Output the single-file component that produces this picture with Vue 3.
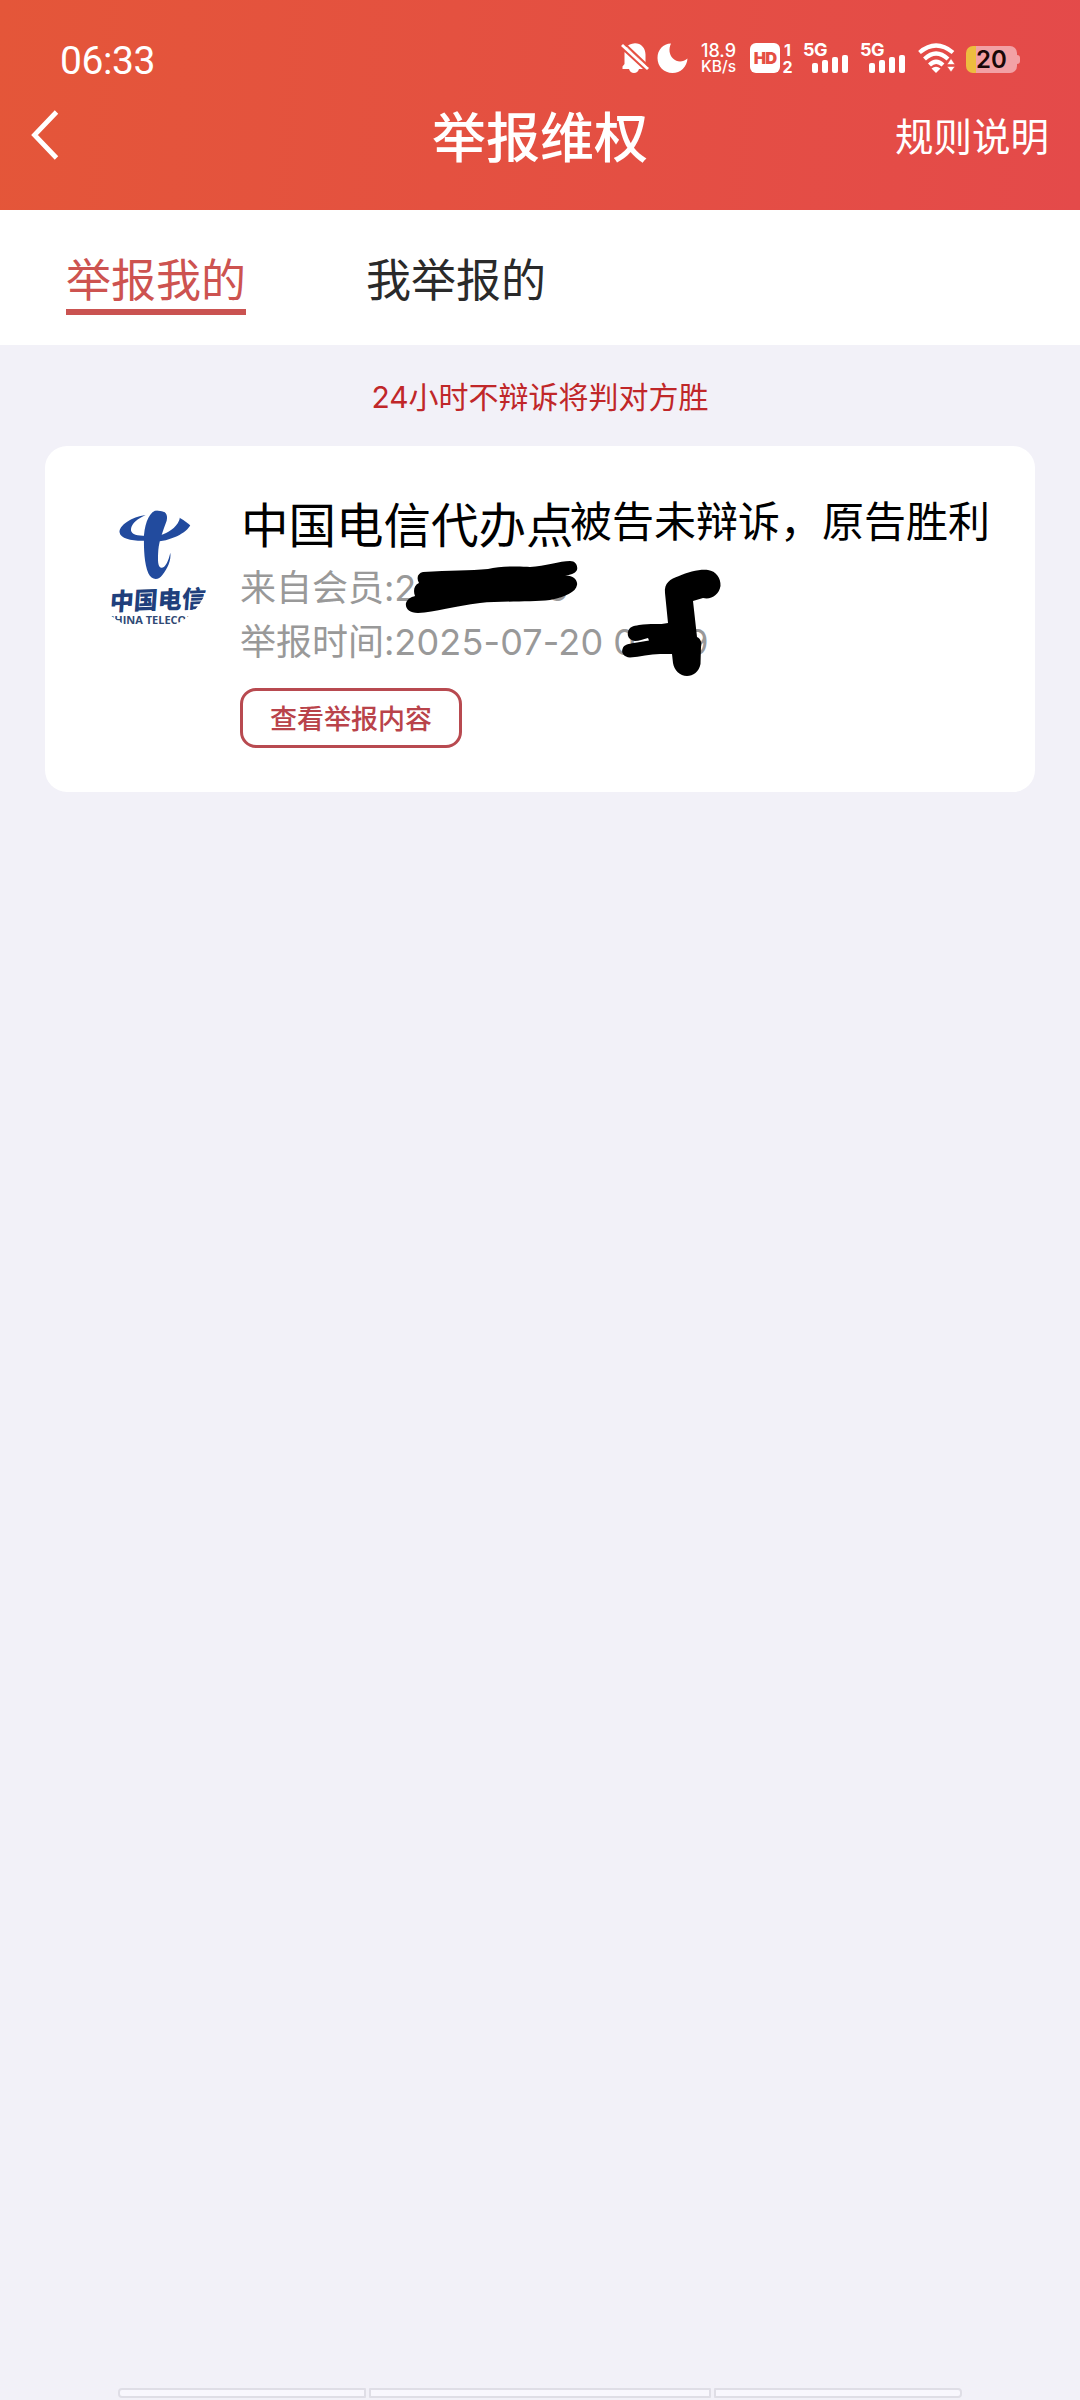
<script setup>
import { ref } from 'vue'

const tabs = ['举报我的', '我举报的']
const active = ref(0)
const report = {
  name: '中国电信代办点',
  result: '被告未辩诉，原告胜利',
  date: '2025-07-20',
}
const bars = [10, 13, 16, 18]
</script>

<template>
  <div class="page">
    <header class="header">
      <div class="status">
        <span class="clock">06:33</span>
        <div class="indicators">
          <svg class="bell" width="28" height="30" viewBox="0 0 28 30">
            <path d="M5 5C7 1.500 10 0.500 14 0.200C20 0.200 24.500 5 24.500 11.500V20L25 21.500L7.500 5.800ZM3.500 9L22 26H18C17.200 28.600 15.500 30 13 30S8.800 28.600 8 26H1.500V23.500L3.500 21Z" fill="#fff" />
            <path d="M1 2L27 26" stroke="#fff" stroke-width="3" />
            <path d="M4 1L28 23.500" stroke="#e5503f" stroke-width="1.800" />
          </svg>
          <svg class="moon" width="31" height="30" viewBox="0 0 31 30">
            <path d="M14 0.500C6 0.500 0.500 7 0.500 15C0.500 23.500 7 30 15.500 30C23.500 30 30 24 30.500 15.500C26 19.500 20 19.500 16 15.500C12 11.500 11.500 5.500 14 0.500Z" fill="#fff" />
          </svg>
          <div class="speed"><span>18.9</span><span>KB/s</span></div>
          <span class="hd">HD</span>
          <div class="sim"><span>1</span><span>2</span></div>
          <div v-for="n in 2" :key="n" class="signal">
            <span>5G</span>
            <div class="bars"><i v-for="h in bars" :key="h" :style="{ height: h + 'px' }"></i></div>
          </div>
          <svg class="wifi" width="37" height="30" viewBox="0 0 37 30">
            <g fill="none" stroke="#fff" stroke-width="4.200">
              <path d="M1.500 9.500Q18 -4.500 35 9.500" />
              <path d="M6.500 16Q18 5 30 16" />
              <path d="M11.500 22Q18 15.500 25 22" />
            </g>
            <path d="M13.500 25.500Q18 22 22.500 25.500L18 30Z" fill="#fff" />
            <path d="M33 15.500L37 21.500H29ZM33 29L29 23.500H37Z" fill="#fff" stroke="#e54d45" stroke-width="0.600" />
          </svg>
          <div class="battery"><span>20</span></div>
        </div>
      </div>
      <nav class="nav">
        <div class="side">
          <svg width="28" height="50" viewBox="0 0 28 50">
            <path d="M25.500 2L3.500 25L25.500 48" fill="none" stroke="#fff" stroke-width="4.800" />
          </svg>
        </div>
        <h1>举报维权</h1>
        <div class="side rules">规则说明</div>
      </nav>
    </header>

    <div class="tabs">
      <div v-for="(t, i) in tabs" :key="t" class="tab" :class="{ active: i === active }" @click="active = i">{{ t }}</div>
    </div>

    <p class="notice">24小时不辩诉将判对方胜</p>

    <section class="card">
      <div class="avatar">
        <svg width="120" height="120" viewBox="90 510 120 120">
          <g fill="#224b9e" transform="translate(105 500) scale(.3333)">
            <path d="M122 45C80 50 40 78 44 98C47 115 80 123 118 122V107C92 108 76 100 78 87C80 70 98 56 122 45Z" />
            <path d="M198 31C222 36 229 50 222 62C212 84 190 98 166 106L164 124C215 116 258 90 260 62C260 44 235 32 198 31Z" />
            <path d="M158 31C135 32 121 65 117 105C116 150 118 190 130 220C140 241 160 242 172 225C188 205 199 180 196 158C190 185 180 205 168 203C158 200 158 180 160 150C163 120 175 90 185 62C190 42 180 31 158 31Z" />
          </g>
          <text x="173" y="609" class="brand" transform="rotate(-2 150 600) skewX(-6)">中国电信</text>
          <text x="152" y="623.500" class="brand-en">CHINA TELECOM</text>
        </svg>
      </div>
      <div class="body">
        <div class="headline">
          <span class="name">{{ report.name }}</span>
          <span class="result">{{ report.result }}</span>
        </div>
        <div class="meta">来自会员:<b>27</b><b class="tail">6</b></div>
        <div class="meta">举报时间:<b>{{ report.date }}</b><b class="hour">0</b><b class="minute">9</b></div>
        <button class="view">查看举报内容</button>
      </div>
      <svg class="ink" width="990" height="346" viewBox="45 446 990 346">
        <path d="M423 572C450 570 470 571 488 569C500 566 520 566 530 567C545 566 560 561 570 561C576 561 578 566 577 570C575 574 570 575 565 575.500C573 575 578 580 577 585C576 592 565 597 550 600C530 602 500 601 480 603C455 606 435 612 418 613C409 613 405 608 406 603C408 598 412 597 415 596C413 591 414 585 419 583C416 578 418 573 423 572Z" />
        <path d="M665 593C664 583 670 579 679 576C688 572 700 569 708 570C716 571 721 578 720.500 586C719 595 711 600 703 598L693 601L697 637C701 639 702 643 701 647L700.500 664C699 672 693 676 687 676C680 676 674 670 673 663L672 654H660C650 654 640 657 630 657.500C624 657 621 653 622.500 649C624 644 629 644 634 643L649 640.500L648 638C643 639 639 641 635 641C629 640 627 636 628 632C629 627 633 626 639 625C650 623 660 625 668 623Z" />
      </svg>
    </section>

    <div class="footer"><i></i><i class="wide"></i><i></i></div>
  </div>
</template>

<style>
body {
  margin: 0;
  background: #f2f1f8;
}
</style>

<style scoped>
.page {
  width: 1080px;
  height: 2400px;
  display: flex;
  flex-direction: column;
  background: #f2f1f8;
  font-family: Inter, "Noto Sans CJK SC", sans-serif;
  overflow: hidden;
}
.header {
  height: 210px;
  box-sizing: border-box;
  background: linear-gradient(95deg, #e45639, #e44a4a);
  color: #fff;
}
.status {
  height: 78px;
  padding: 38px 60px 0;
  box-sizing: border-box;
  display: flex;
  justify-content: space-between;
}
.clock {
  font: 400 39px/46px Roboto, sans-serif;
  letter-spacing: -0.400px;
}
.indicators {
  display: flex;
  align-items: flex-start;
  height: 30px;
  margin-top: 5px;
}
.moon { margin-left: 8px; }
.speed {
  width: 37px;
  margin-left: 11px;
  margin-right: 1px;
  display: flex;
  flex-direction: column;
  align-items: flex-end;
  font: 500 18px/15px Inter, sans-serif;
}
.speed span + span { font-size: 15.500px; line-height: 18px; }
.hd {
  width: 30px;
  height: 30px;
  margin-left: 13px;
  border-radius: 6px;
  background: #fff;
  color: #e54f43;
  font: 900 16.500px/30px Inter, sans-serif;
  letter-spacing: -1px;
  text-align: center;
}
.sim {
  width: 11px;
  margin-left: 2px;
  display: flex;
  flex-direction: column;
  align-items: center;
  font: 700 16px/17px Inter, sans-serif;
}
.sim span:first-child { height: 16px; line-height: 14px; }
.signal {
  width: 45px;
  height: 30px;
  margin-left: 10px;
  display: flex;
  flex-direction: column;
  font: 700 18px/14px Inter, sans-serif;
}
.signal + .signal { margin-left: 12px; }
.signal span { height: 12px; letter-spacing: -0.500px; }
.bars {
  height: 18px;
  display: flex;
  align-items: flex-end;
  justify-content: flex-end;
  gap: 4px;
}
.bars i {
  width: 6px;
  border-radius: 2px;
  background: #fff;
}
.wifi { margin-left: 13px; }
.battery {
  width: 51px;
  height: 27px;
  margin: 3px 3px 0 11px;
  position: relative;
  border-radius: 7px;
  background: linear-gradient(90deg, #edbd3f 10px, #f2a1a5 10px);
  color: #190808;
  font: 600 24px/28px Inter, sans-serif;
  text-align: center;
}
.battery::after {
  content: "";
  position: absolute;
  right: -3px;
  top: 9px;
  width: 3px;
  height: 9px;
  border-radius: 0 3px 3px 0;
  background: #f2a1a5;
}
.nav {
  height: 120px;
  padding: 0 31px;
  display: flex;
  align-items: center;
}
.side { flex: 1; display: flex; margin-top: -6px; }
.rules {
  justify-content: flex-end;
  font-size: 38.500px;
  line-height: 60px;
  margin-top: -2px;
}
h1 {
  margin: 2px 0 0;
  font-size: 54px;
  font-weight: 500;
  line-height: 80px;
}
.tabs {
  height: 135px;
  box-sizing: border-box;
  padding: 41px 66px 0;
  display: flex;
  align-items: flex-start;
  gap: 120px;
  background: #fff;
  color: #2a2a2a;
  font-size: 45px;
  line-height: 60px;
}
.tab { height: 58px; }
.tab.active {
  color: #cd5350;
  border-bottom: 6px solid #ca5351;
}
.notice {
  margin: 0;
  height: 101px;
  text-align: center;
  font-size: 30px;
  line-height: 104px;
  color: #c02729;
}
.card {
  position: relative;
  width: 990px;
  height: 346px;
  margin: 0 auto;
  padding: 64px 45px 0;
  box-sizing: border-box;
  display: flex;
  gap: 30px;
  border-radius: 22px;
  background: #fff;
}
.avatar {
  width: 120px;
  height: 120px;
  border-radius: 50%;
  overflow: hidden;
}
.avatar svg { display: block; }
.brand {
  font: 900 24px "Noto Sans CJK SC", sans-serif;
  fill: #203f7c;
}
.brand-en {
  font: 700 11px "Open Sans", sans-serif;
  fill: #304a75;
  text-anchor: middle;
}
.body { display: flex; flex-direction: column; align-items: flex-start; }
.headline {
  height: 51px;
  display: flex;
  align-items: flex-start;
  white-space: nowrap;
  color: #000;
}
.name { font-size: 47.500px; line-height: 60px; width: 329px; padding-left: 1px; margin-top: -14px; }
.result { font-size: 42px; line-height: 54px; margin-top: -15px; }
.meta {
  height: 54px;
  display: flex;
  white-space: pre;
  font-size: 36px;
  line-height: 55px;
  color: #999;
}
.meta b { font-weight: 400; letter-spacing: 0.150px; }
.tail { margin-left: 109px; }
.hour { margin-left: 10px; }
.minute { margin-left: 50px; }
.view {
  width: 222px;
  height: 60px;
  margin: 19px 0 0;
  padding: 0;
  border: 3px solid #b84a50;
  border-radius: 16px;
  background: #fff;
  color: #b9434a;
  font: 500 27px/52px "Noto Sans CJK SC", sans-serif;
}
.ink { position: absolute; left: 0; top: 0; }
.footer {
  margin: auto 0 2px;
  display: flex;
  justify-content: center;
  gap: 3px;
}
.footer i {
  width: 248px;
  height: 10px;
  box-sizing: border-box;
  border: 2px solid #dfdee6;
  border-radius: 4px 1px 1px 4px;
  background: #f8f7fd;
}
.footer .wide { width: 342px; border-radius: 1px; }
.footer i:last-child { border-radius: 1px 4px 4px 1px; }
</style>
